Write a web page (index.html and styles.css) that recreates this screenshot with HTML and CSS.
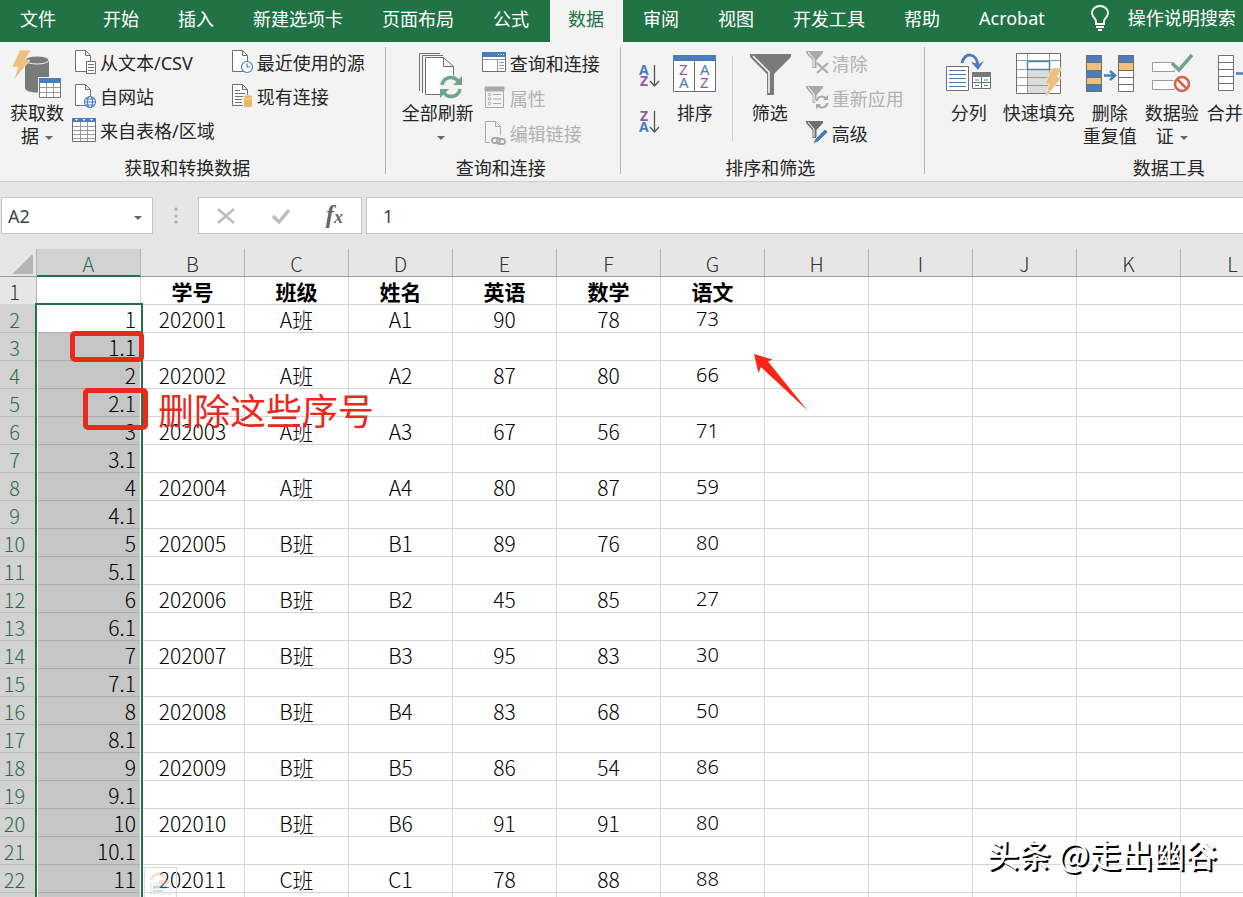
FILE: index.html
```
<!DOCTYPE html>
<html lang="zh-CN">
<head>
    <meta charset="UTF-8">
    <meta name="viewport" content="width=device-width, initial-scale=1.0">
    <title>Excel</title>
    <link rel="stylesheet" href="styles.css">
</head>
<body>
    <nav class="tabs">
        <button class="tab file">文件</button>
        <button class="tab">开始</button>
        <button class="tab">插入</button>
        <button class="tab">新建选项卡</button>
        <button class="tab">页面布局</button>
        <button class="tab">公式</button>
        <button class="tab active">数据</button>
        <button class="tab">审阅</button>
        <button class="tab">视图</button>
        <button class="tab">开发工具</button>
        <button class="tab">帮助</button>
        <button class="tab">Acrobat</button>
        <label class="tell-me">
            <svg width="20" height="26" viewBox="0 0 20 26" fill="none" stroke="#fff" stroke-width="1.8"><path d="M6 19v-3c0-2-4-4-4-8a8 7 0 0 1 16 0c0 4-4 6-4 8v3zM6 22h8M8 25h4"/></svg>
            <input type="text" placeholder="操作说明搜索" aria-label="操作说明搜索">
        </label>
    </nav>

    <div class="ribbon">
        <section class="group">
            <div class="group-body">
                <button class="big">
                    <svg width="52" height="50" viewBox="0 0 52 50">
                        <path d="M14 11v27c0 6 24 6 24 0V11z" fill="#7a7a7a"/>
                        <ellipse cx="26" cy="10" rx="12" ry="4" fill="#7a7a7a" stroke="#f3f3f3"/>
                        <path d="M9 0h11l-6 10h5L3 30l4-13H1z" fill="#eec07b" stroke="#f3f3f3" stroke-width=".6"/>
                        <rect x="27" y="27" width="25" height="22" fill="#f3f3f3"/>
                        <path d="M28.500 28.500h21v19h-21z" fill="#fff" stroke="#7a7a7a"/>
                        <path d="M28 28h22v5H28z" fill="#4a7ebb"/>
                        <path d="M35.500 33v14M42.500 33v14M29 37.500h20M29 42.500h20" stroke="#9a9a9a"/>
                    </svg>
                    <span>获取数<br>据<i class="caret"></i></span>
                </button>
                <div class="cmd-list compact">
                    <button class="cmd">
                        <svg width="24" height="24" viewBox="0 0 24 24" fill="#fff" stroke="#6f6f6f"><path d="M3.500.5h10l5 5v16h-15zM13.500.5v5h5"/><path d="M14.500 11.500h9v12h-9z"/><path d="M16 14.500h6M16 17.500h6M16 20.500h6"/></svg>
                        从文本/CSV
                    </button>
                    <button class="cmd">
                        <svg width="24" height="24" viewBox="0 0 24 24" fill="#fff" stroke="#6f6f6f"><path d="M3.500.5h10l5 5v16h-15zM13.500.5v5h5"/><g stroke="#4a7ebb" stroke-width="1.200"><circle cx="18" cy="18" r="5.500"/><ellipse cx="18" cy="18" rx="2.500" ry="5.500"/><path d="M12.500 18h11M13.500 15h9M13.500 21h9"/></g></svg>
                        自网站
                    </button>
                    <button class="cmd">
                        <svg width="24" height="24" viewBox="0 0 24 24"><path d="M.5.5h23v23H.5z" fill="#fff" stroke="#6f6f6f"/><path d="M0 0h24v4H0z" fill="#4a7ebb"/><path d="M3 1h3L4.500 3zM10.500 1h3L12 3zM18 1h3l-1.500 2z" fill="#fff"/><path d="M8.500 4v19M15.500 4v19M1 8.500h22M1 12.500h22M1 16.500h22M1 20.500h22" stroke="#999"/></svg>
                        来自表格/区域
                    </button>
                </div>
                <div class="cmd-list compact second">
                    <button class="cmd">
                        <svg width="24" height="24" viewBox="0 0 24 24" fill="#fff" stroke="#6f6f6f"><path d="M3.500.5h10l5 5v16h-15zM13.500.5v5h5"/><g stroke="#4a7ebb" stroke-width="1.200"><circle cx="18" cy="17" r="5.500"/><path d="M18 13.500V17h3"/></g></svg>
                        最近使用的源
                    </button>
                    <button class="cmd">
                        <svg width="24" height="24" viewBox="0 0 24 24" fill="#fff" stroke="#6f6f6f"><path d="M3.500.5h10l5 5v16h-15zM13.500.5v5h5M6 6.500h5M6 9.500h10M6 12.500h8M6 15.500h7M6 18.500h7"/><path d="M14.500 13v9c0 2 9 2 9 0v-9z" fill="#eab765" stroke="#f3f3f3"/><ellipse cx="19" cy="13" rx="4.500" ry="2" fill="#eab765" stroke="#f8e5c8" stroke-width=".8"/></svg>
                        现有连接
                    </button>
                </div>
            </div>
            <div class="group-label">获取和转换数据</div>
        </section>
        <span class="sep"></span>

        <section class="group">
            <div class="group-body">
                <button class="big">
                    <svg width="52" height="50" viewBox="0 0 52 50" fill="none" stroke="#6f6f6f">
                        <path d="M7.500 41V3.500H28M10.500 43V5.500H31"/>
                        <path d="M13.500 7.500h18l10 9v28h-28zM31.500 7.500v9h10" fill="#fff"/>
                        <circle cx="39" cy="37" r="12" fill="#f3f3f3" stroke="none"/>
                        <path d="M30 35a9 9 0 0 1 16-4M48 39a9 9 0 0 1-16 4" stroke="#6fa58b" stroke-width="3.500"/>
                        <path d="M50 26v9h-9zM28 48v-9h9z" fill="#6fa58b" stroke="none"/>
                    </svg>
                    <span>全部刷新<br><i class="caret"></i></span>
                </button>
                <div class="cmd-list">
                    <button class="cmd">
                        <svg width="24" height="24" viewBox="0 0 24 24"><path d="M.5 1.500h23v19H.5z" fill="#fff" stroke="#6f6f6f"/><path d="M0 1h24v5H0z" fill="#4a7ebb"/><path d="M16 3.500h1M18.500 3.500h1M21 3.500h1" stroke="#fff"/><path d="M1 8.500h22M15.500 9v11M17 11.500h5M17 14.500h5M17 17.500h5" stroke="#999"/></svg>
                        查询和连接
                    </button>
                    <button class="cmd" disabled>
                        <svg width="24" height="24" viewBox="0 0 24 24" fill="none" stroke="#a9a9a9"><path d="M3.500 1.500h18v20h-18z"/><path d="M3 1h19v4H3z" fill="#a9a9a9"/><circle cx="7.500" cy="8.500" r="1.200"/><circle cx="7.500" cy="13" r="1.200"/><circle cx="7.500" cy="17.500" r="1.200"/><path d="M11 8.500h8M11 13h8M11 17.500h8"/></svg>
                        属性
                    </button>
                    <button class="cmd" disabled>
                        <svg width="24" height="24" viewBox="0 0 24 24" fill="none" stroke="#a9a9a9"><path d="M8 21.500H3.500V.5h10l5 5V14M13.500.5v5h5"/><g stroke-width="1.800"><rect x="10" y="17" width="8" height="5" rx="2.500"/><rect x="15" y="18" width="8" height="5" rx="2.500"/></g></svg>
                        编辑链接
                    </button>
                </div>
            </div>
            <div class="group-label">查询和连接</div>
        </section>
        <span class="sep"></span>

        <section class="group">
            <div class="group-body">
                <div class="az-list">
                    <button class="az" aria-label="升序">
                        <svg width="24" height="26" viewBox="0 0 24 26"><text class="az-text blue" x="2" y="12">A</text><text class="az-text purple" x="3" y="23">Z</text><path d="M17.500 2v20M13 18l4.500 5 4.500-5" fill="none" stroke="#555" stroke-width="1.300"/></svg>
                    </button>
                    <button class="az" aria-label="降序">
                        <svg width="24" height="26" viewBox="0 0 24 26"><text class="az-text purple" x="3" y="12">Z</text><text class="az-text blue" x="2" y="23">A</text><path d="M17.500 2v20M13 18l4.500 5 4.500-5" fill="none" stroke="#555" stroke-width="1.300"/></svg>
                    </button>
                </div>
                <button class="big">
                    <svg width="52" height="50" viewBox="0 0 52 50">
                        <path d="M4.500 5.500h42v36h-42z" fill="#fff" stroke="#6f6f6f"/>
                        <path d="M4 5h43v6H4z" fill="#4a7ebb"/>
                        <path d="M25.500 11v30" stroke="#6f6f6f"/>
                        <text class="sort-text purple" x="10" y="25">Z</text>
                        <text class="sort-text blue" x="10" y="38">A</text>
                        <text class="sort-text blue" x="31" y="25">A</text>
                        <text class="sort-text purple" x="31" y="38">Z</text>
                    </svg>
                    <span>排序</span>
                </button>
                <span class="sep inner"></span>
                <button class="big">
                    <svg width="52" height="50" viewBox="0 0 52 50">
                        <path d="M6 4h41v3L30 24v21h-7V24L6 7z" fill="#7a7a7a"/>
                        <path d="M9 6l16 16v21" fill="none" stroke="#fff" stroke-width="1.500"/>
                    </svg>
                    <span>筛选</span>
                </button>
                <div class="cmd-list">
                    <button class="cmd" disabled>
                        <svg width="24" height="24" viewBox="0 0 24 24"><path d="M2 0h17v2l-6.500 7v8h-4V9L2 2z" fill="#a9a9a9"/><path d="M4 1l6 7v8" fill="none" stroke="#fff"/><path d="M13 12l11 10M24 12L13 22" stroke="#a9a9a9" stroke-width="2"/></svg>
                        清除
                    </button>
                    <button class="cmd" disabled>
                        <svg width="24" height="24" viewBox="0 0 24 24"><path d="M2 0h17v2l-6.500 7v8h-4V9L2 2z" fill="#a9a9a9"/><path d="M4 1l6 7v8" fill="none" stroke="#fff"/><circle cx="18" cy="16" r="7" fill="#f3f3f3"/><path d="M12.500 15a5.500 5.500 0 0 1 10-2M23.500 17a5.500 5.500 0 0 1-10 2" fill="none" stroke="#a9a9a9" stroke-width="2"/><path d="M24 9v5h-5zM12 23v-5h5z" fill="#a9a9a9"/></svg>
                        重新应用
                    </button>
                    <button class="cmd">
                        <svg width="24" height="24" viewBox="0 0 24 24"><path d="M2 0h17v2l-6.500 7v8h-4V9L2 2z" fill="#6f6f6f"/><path d="M4 1l6 7v8" fill="none" stroke="#fff"/><path d="M9 23l2-5L21 8l3 3-10 10z" fill="#4a7ebb" stroke="#f3f3f3" stroke-width=".8"/></svg>
                        高级
                    </button>
                </div>
            </div>
            <div class="group-label">排序和筛选</div>
        </section>
        <span class="sep"></span>

        <section class="group tools">
            <div class="group-body">
                <button class="big">
                    <svg width="52" height="50" viewBox="0 0 52 50">
                        <path d="M3.500 16.500h22v24h-22z" fill="#fff" stroke="#6f6f6f"/>
                        <path d="M6 20.500h17M6 24.500h17M6 28.500h17M6 32.500h17M6 36.500h17" stroke="#4a7ebb"/>
                        <path d="M29.500 22.500h18v16h-18z" fill="#fff" stroke="#6f6f6f"/>
                        <path d="M29 22h19v5H29z" fill="#7a7a7a"/>
                        <path d="M38.500 27v11M30 32.500h17" stroke="#6f6f6f"/>
                        <path d="M32 30h4M41 30h4M32 35.500h4M41 35.500h4" stroke="#4a7ebb"/>
                        <path d="M19 13C21 2 34 2 35 16" fill="none" stroke="#4a7ebb" stroke-width="3"/>
                        <path d="M28 12l7 8 6-9-5 3z" fill="#4a7ebb"/>
                    </svg>
                    <span>分列</span>
                </button>
                <button class="big">
                    <svg width="52" height="50" viewBox="0 0 52 50">
                        <path d="M3.500 3.500h44v40h-44z" fill="#fff" stroke="#6f6f6f"/>
                        <path d="M14 20h22v23H14z" fill="#dcdcdc"/>
                        <path d="M14.500 4v39M36.500 4v39M4 10.500h43M4 19.500h43M4 27.500h43M4 35.500h43" stroke="#999"/>
                        <path d="M14.500 11.500h22v8h-22z" fill="#fff" stroke="#4a8aa8" stroke-width="1.500"/>
                        <path d="M39 18h10l-5 9h5L32 48l4-14h-4z" fill="#eec07b" stroke="#f3f3f3" stroke-width=".6"/>
                    </svg>
                    <span>快速填充</span>
                </button>
                <button class="big">
                    <svg width="52" height="50" viewBox="0 0 52 50">
                        <path d="M2 5h16v37H2zM34 5h16v8H34z" fill="#4a7ebb"/>
                        <path d="M2 13h16v7H2zM2 27h16v8H2zM34 13h16v7H34z" fill="#eec07b"/>
                        <path d="M34 20h16v22H34z" fill="#fff"/>
                        <path d="M2.500 5.500h15v36h-15zM2 12.500h16M2 20.500h16M2 27.500h16M2 34.500h16M34.500 5.500h15v36h-15zM34 12.500h16M34 20.500h16M34 27.500h16M34 34.500h16" fill="none" stroke="#6f6f6f"/>
                        <path d="M20 25.500h10M26 21l5 4.500-5 4.500" fill="none" stroke="#4a7ebb" stroke-width="2.500"/>
                    </svg>
                    <span>删除<br>重复值</span>
                </button>
                <button class="big">
                    <svg width="52" height="50" viewBox="0 0 52 50">
                        <path d="M6.500 12.500h22v9h-22zM6.500 30.500h22v9h-22z" fill="#fff" stroke="#999"/>
                        <path d="M26 13l7 7L46 5" fill="none" stroke="#f3f3f3" stroke-width="6"/>
                        <path d="M26 13l7 7L46 5" fill="none" stroke="#6fa58b" stroke-width="3.500"/>
                        <circle cx="36" cy="34" r="9" fill="#f3f3f3"/>
                        <path d="M31 29l10 10" stroke="#cf6450" stroke-width="2.500"/>
                        <circle cx="36" cy="34" r="7" fill="none" stroke="#cf6450" stroke-width="2.500"/>
                    </svg>
                    <span>数据验<br>证<i class="caret"></i></span>
                </button>
                <button class="big">
                    <svg width="52" height="50" viewBox="0 0 52 50">
                        <path d="M1.500 5.500h15v35h-15zM1 12.500h16M1 19.500h16M1 26.500h16M1 33.500h16" fill="#fff" stroke="#6f6f6f"/>
                        <path d="M19 23.500h12M27 19l5 4.500-5 4.500" fill="none" stroke="#4a7ebb" stroke-width="2.500"/>
                    </svg>
                    <span>合并计算</span>
                </button>
            </div>
            <div class="group-label">数据工具</div>
        </section>
    </div>

    <div class="formula-bar">
        <div class="name-box">
            <input type="text" value="A2" aria-label="名称框">
            <button aria-label="名称列表"><i class="caret"></i></button>
        </div>
        <span class="grip"></span>
        <div class="fx-box">
            <button aria-label="取消"><svg width="20" height="20" viewBox="0 0 20 20"><path d="M2 3l16 14M18 3L2 17" stroke="#bcbcbc" stroke-width="2.500"/></svg></button>
            <button aria-label="输入"><svg width="20" height="20" viewBox="0 0 20 20"><path d="M2 10l6 6L18 4" fill="none" stroke="#bcbcbc" stroke-width="3.500"/></svg></button>
            <button class="fx" aria-label="插入函数">f<small>x</small></button>
        </div>
        <input class="formula" type="text" value="1" aria-label="编辑栏">
    </div>

    <main class="sheet">
        <table class="grid">
            <thead><tr id="col-heads"></tr></thead>
            <tbody id="rows"></tbody>
        </table>
        <div class="selection"></div>
        <div class="quick">
            <svg width="32" height="30" viewBox="0 0 32 30" opacity=".45"><path d="M6 15h20v11H6z" fill="#f6f6f6" stroke="#b9cfc8"/><path d="M6 12c4-8 10-8 14-2" fill="none" stroke="#edc29b" stroke-width="3"/><path d="M8 19h14" stroke="#7aa6cf" stroke-width="3"/><path d="M8 23h10" stroke="#8fc0b0" stroke-width="2"/><path d="M14 12h10v4H14z" fill="#eeb0a8"/></svg>
        </div>
        <div class="mark mark-one"></div>
        <div class="mark mark-two"></div>
        <div class="note">删除这些序号</div>
        <svg class="arrow" width="56" height="60" viewBox="0 0 56 60"><path d="M1 1l18.500 5.500-4.500 2L55 58 8 14l-2.500 6z" fill="#fb2516"/></svg>
        <div class="watermark">头条 @走出幽谷</div>
    </main>

    <script>
        const cols = 'ABCDEFGHIJKL'.split('');
        const titles = ['', '学号', '班级', '姓名', '英语', '数学', '语文'];
        const students = [
            ['202001', 'A班', 'A1', 90, 78, 73],
            ['202002', 'A班', 'A2', 87, 80, 66],
            ['202003', 'A班', 'A3', 67, 56, 71],
            ['202004', 'A班', 'A4', 80, 87, 59],
            ['202005', 'B班', 'B1', 89, 76, 80],
            ['202006', 'B班', 'B2', 45, 85, 27],
            ['202007', 'B班', 'B3', 95, 83, 30],
            ['202008', 'B班', 'B4', 83, 68, 50],
            ['202009', 'B班', 'B5', 86, 54, 86],
            ['202010', 'B班', 'B6', 91, 91, 80],
            ['202011', 'C班', 'C1', 78, 88, 88]
        ];

        function cells(values, tag) {
            return cols.map((c, i) => `<${tag} class="col-${c.toLowerCase()}">${values[i] ?? ''}</${tag}>`).join('');
        }

        document.getElementById('col-heads').innerHTML = '<th class="corner"></th>' + cells(cols, 'th');

        let html = '<tr class="titles"><th>1</th>' + cells(titles, 'td') + '</tr>';
        students.forEach((s, i) => {
            const n = i + 1;
            html += `<tr class="picked"><th>${n * 2}</th>${cells([n, ...s], 'td')}</tr>`;
            // blank row in between keeps only the helper number
            html += `<tr class="picked"><th>${n * 2 + 1}</th>${cells([n + '.1'], 'td')}</tr>`;
        });
        document.getElementById('rows').innerHTML = html;
    </script>
</body>
</html>
```
FILE: styles.css
```
* {
    box-sizing: border-box;
}

body {
    margin: 0;
    height: 100vh;
    display: flex;
    flex-direction: column;
    overflow: hidden;
    background: #e6e6e6;
    color: #262626;
    font-family: "Noto Sans", "Noto Sans CJK SC", sans-serif;
    font-size: 18px;
}

button,
input {
    margin: 0;
    padding: 0;
    border: none;
    background: none;
    color: inherit;
    font: inherit;
}

svg {
    display: block;
    flex: none;
    overflow: visible;
}

/* tabs */
.tabs {
    display: flex;
    flex: none;
    gap: 2px;
    height: 42px;
    padding-left: 2px;
    background: #217346;
    color: #fff;
}

.tab {
    flex: none;
    padding: 0 19px 6px 18px;
    white-space: nowrap;
}

.tab.file {
    margin-right: 8px;
}

.tab.active {
    background: #f3f3f3;
    color: #217346;
}

.tell-me {
    display: flex;
    flex: 1;
    align-items: center;
    gap: 18px;
    min-width: 0;
    padding: 0 0 6px 24px;
}

.tell-me input {
    flex: 1;
    min-width: 0;
}

.tell-me input::placeholder {
    color: #fff;
    opacity: 1;
}

/* ribbon */
.ribbon {
    display: flex;
    flex: none;
    overflow: hidden;
    background: #f3f3f3;
    border-bottom: 1px solid #cdcdcd;
}

.group {
    flex: none;
    padding: 3px 20px 2px 16px;
}

.group:first-child {
    margin-left: -6px;
}

.tools {
    min-width: 490px;
    padding-left: 18px;
}

.group-body {
    display: flex;
    gap: 8px;
    height: 112px;
}

.group-label {
    line-height: 22px;
    text-align: center;
}

.sep {
    flex: none;
    width: 1px;
    margin: 5px 0 7px;
    background: #b4b4b4;
}

.sep.inner {
    margin: 11px 3px 16px;
    background: #cfcfcf;
}

.big {
    display: flex;
    flex-direction: column;
    align-items: center;
    gap: 2px;
    min-width: 52px;
    padding-top: 5px;
    line-height: 23px;
    white-space: nowrap;
}

.caret {
    display: inline-block;
    margin-left: 6px;
    border: 4px solid transparent;
    border-top-color: #666;
    border-bottom: none;
    vertical-align: middle;
}

.cmd-list {
    display: flex;
    flex-direction: column;
}

.cmd-list.second {
    margin-left: 6px;
}

.cmd {
    display: flex;
    align-items: center;
    gap: 4px;
    height: 35px;
    white-space: nowrap;
}

.compact .cmd {
    height: 34px;
}

.cmd:disabled {
    color: #b1b1b1;
}

.az-list {
    display: flex;
    flex-direction: column;
    gap: 20px;
    padding-top: 18px;
}

.az-text {
    font-size: 14px;
    font-weight: 700;
}

.sort-text {
    font-size: 15px;
}

.blue {
    fill: #4a7ebb;
}

.purple {
    fill: #8e5aa8;
}

/* formula bar */
.formula-bar {
    display: flex;
    flex: none;
    height: 67px;
    padding: 15px 0 15px 1px;
}

.name-box,
.fx-box,
.formula {
    background: #fff;
    border: 1px solid #c6c6c6;
}

.name-box {
    display: flex;
    width: 152px;
    padding: 0 10px 0 6px;
    color: #444;
}

.name-box input {
    flex: 1;
    min-width: 0;
}

.grip {
    width: 45px;
    background: radial-gradient(circle, #ababab 1px, transparent 2px) center / 6px 6px no-repeat,
        radial-gradient(circle, #ababab 1px, transparent 2px) center 9px / 6px 6px no-repeat,
        radial-gradient(circle, #ababab 1px, transparent 2px) center 22px / 6px 6px no-repeat;
}

.fx-box {
    display: flex;
    align-items: center;
    justify-content: space-between;
    width: 164px;
    margin-right: 4px;
    padding: 0 18px 0 17px;
}

.fx {
    color: #666;
    font: italic bold 25px/30px "Liberation Serif", serif;
}

.fx small {
    font-size: 18px;
}

.formula {
    flex: 1;
    min-width: 0;
    padding-left: 16px;
    border-right: none;
    color: #444;
}

/* sheet */
.sheet {
    position: relative;
    flex: 1;
    overflow: hidden;
    color: #000;
    font-family: "Noto Sans CJK SC", sans-serif;
}

.grid {
    width: 1285px;
    table-layout: fixed;
    border-collapse: separate;
    border-spacing: 0;
    font-size: 21px;
    font-weight: 300;
    line-height: 25px;
}

.grid th,
.grid td {
    height: 28px;
    padding: 2px 0 0;
    border-right: 1px solid #d4d4d4;
    border-bottom: 1px solid #d4d4d4;
    text-align: center;
    white-space: nowrap;
}

.grid td {
    background: #fff;
}

.grid th {
    background: #e6e6e6;
    border-right-color: #b4b4b4;
    color: #333;
    font-size: 20px;
    font-weight: 300;
}

.grid thead th {
    border-bottom-color: #9b9b9b;
}

.grid thead .col-a {
    padding-top: 3px;
    background: #d2d2d2;
    border-bottom: 2px solid #217346;
    color: #2f6b4c;
    line-height: 23px;
}

.grid .corner {
    width: 37px;
    background: linear-gradient(135deg, transparent 50%, #b4b4b4 50%) 13px 5px / 20px 20px no-repeat #e6e6e6;
}

.grid tbody th {
    padding-right: 7px;
}

.grid .picked th {
    background: #d2d2d2;
    border-bottom-color: #bababa;
    color: #2f6b4c;
}

.grid .titles td {
    font-weight: 700;
}

.grid .picked .col-a {
    padding-right: 4px;
    background: #c6c6c6;
    border-bottom-color: #ababab;
    text-align: right;
}

.grid .picked:nth-child(2) .col-a {
    background: #fff;
}

.grid .picked .col-g {
    padding-right: 10px;
    font-family: "Noto Sans", sans-serif;
    font-size: 20px;
    line-height: 23px;
    vertical-align: top;
}

/* things lying over the grid */
.selection {
    position: absolute;
    top: 54px;
    bottom: -10px;
    left: 35px;
    width: 108px;
    border: 2px solid #217346;
    box-shadow: inset 0 0 0 1px #fff;
}

.quick {
    position: absolute;
    top: 618px;
    left: 144px;
    width: 33px;
    border: 1px solid #d5dfdc;
}

.mark {
    position: absolute;
    border: 5px solid #e8291c;
    border-radius: 5px;
}

.mark-one {
    top: 82px;
    left: 70px;
    width: 74px;
    height: 31px;
}

.mark-two {
    top: 139px;
    left: 83px;
    width: 65px;
    height: 42px;
}

.note {
    position: absolute;
    top: 140px;
    left: 158px;
    color: #e8291c;
    font-size: 36px;
    line-height: 40px;
    white-space: nowrap;
}

.arrow {
    position: absolute;
    top: 104px;
    left: 753px;
}

.watermark {
    position: absolute;
    right: 26px;
    bottom: 22px;
    color: #fff;
    font-size: 32px;
    font-weight: 500;
    line-height: 44px;
    text-shadow: 2px 2px 0 #000;
    white-space: nowrap;
}
```
